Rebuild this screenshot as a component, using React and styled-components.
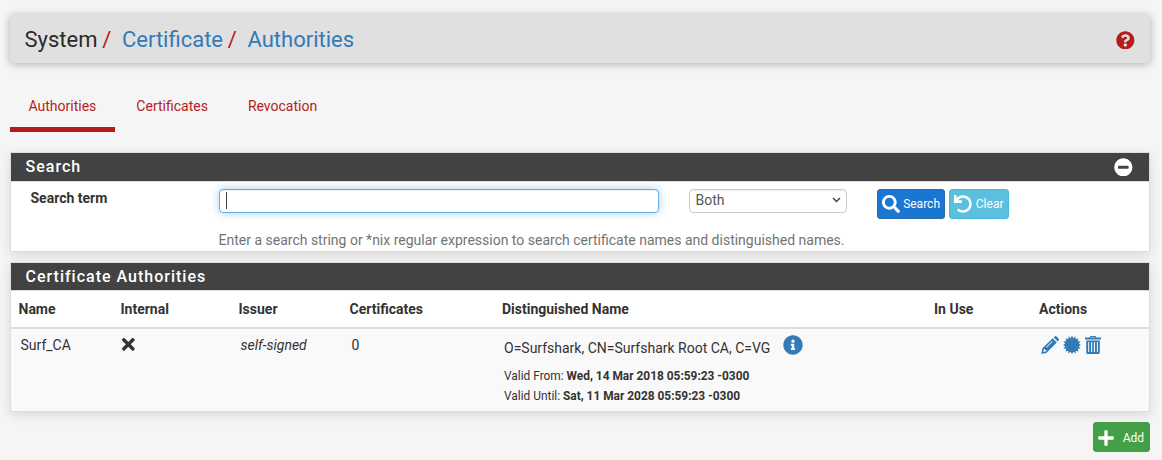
import React from "react";
import styled, { createGlobalStyle, css } from "styled-components";
import {
  FaQuestionCircle,
  FaMinusCircle,
  FaSearch,
  FaUndo,
  FaTimes,
  FaInfoCircle,
  FaPlus,
} from "react-icons/fa";

const Global = createGlobalStyle`
  * { box-sizing: border-box; }
  body {
    margin: 0;
    background: #f5f5f5;
    color: #333;
    font-family: Roboto, "Liberation Sans", sans-serif;
    font-size: 14px;
    line-height: 20px;
    overflow: hidden;
  }
  svg { display: block; flex: none; }
`;

const Page = styled.div`
  padding: 15px 12px 0 10px;
`;

const Header = styled.header`
  display: flex;
  align-items: center;
  justify-content: space-between;
  height: 48px;
  padding: 2px 15px 0 14.5px;
  background: #e0e0e0;
  border-radius: 3px;
  box-shadow: 0 1px 9px rgba(0, 0, 0, 0.3);
  color: #b71c1c;
`;

const Crumbs = styled.nav`
  display: flex;
  font-size: 22px;
  line-height: 46px;
  color: #2b2b2b;
`;

const Crumb = styled.a`
  color: #337ab7;
`;

const Slash = styled.span`
  color: #b71c1c;
  padding: 0 10.7px 0 4.7px;
`;

const Tabs = styled.ul`
  display: flex;
  list-style: none;
  margin: 20px 0 20px;
  padding: 0;
`;

const Tab = styled.li`
  height: 49px;
  padding: 13px 18.5px 0;
  margin-right: 3px;
  color: #b71c1c;
  border-bottom: 5px solid ${(p) => (p.$active ? "#b71c1c" : "transparent")};
`;

const Panel = styled.section`
  margin-bottom: 10px;
  background: #fff;
  border: 1px solid #ddd;
  box-shadow: 0 3px 10px rgba(0, 0, 0, 0.12);
`;

const PanelTitle = styled.h2`
  display: flex;
  align-items: center;
  justify-content: space-between;
  height: ${(p) => p.$height}px;
  margin: 0;
  padding: 0 16px 0 14.5px;
  background: #424242;
  border-bottom: 1px solid #ddd;
  color: #fff;
  font-size: 16px;
  font-weight: 500;
  letter-spacing: 1px;
`;

const SearchForm = styled.div`
  display: grid;
  grid-template-columns: 188.5px 440px 188px auto;
  height: 69px;
  padding: 7px 0 0 19.5px;
`;

const Label = styled.label`
  font-weight: 700;
  line-height: 19px;
`;

const fieldBox = css`
  display: flex;
  align-items: center;
  height: 24px;
  background: #fff;
  border-radius: 4px;
  color: #555;
`;

const TextField = styled.div`
  ${fieldBox}
  padding: 0 6px 2px;
  border: 1px solid #66afe9;
  box-shadow: inset 0 1px 1px rgba(0, 0, 0, 0.075), 0 0 8px rgba(102, 175, 233, 0.6);
`;

const Caret = styled.span`
  width: 1px;
  height: 17px;
  background: #444;
`;

const Select = styled.div`
  ${fieldBox}
  justify-content: space-between;
  padding: 0 5px 2px 5.5px;
  margin-left: 30px;
  border: 1px solid #ccc;
  box-shadow: inset 0 1px 1px rgba(0, 0, 0, 0.075);
`;

const Buttons = styled.div`
  display: flex;
  gap: 4px;
  margin-left: 30px;
`;

const tones = {
  blue: ["#1976d2", "#2e6da4"],
  cyan: ["#5bc0de", "#46b8da"],
  green: ["#43a047", "#43a047"],
};

const Button = styled.button`
  display: flex;
  align-items: center;
  justify-content: space-between;
  width: ${(p) => p.$width}px;
  height: 30px;
  padding: ${(p) => p.$pad || "0 4px 0 3.5px"};
  border: 1px solid ${(p) => tones[p.$tone][1]};
  border-radius: 3px;
  background: ${(p) => tones[p.$tone][0]};
  color: #fff;
  font: 12px/18px Roboto, "Liberation Sans", sans-serif;
`;

const Help = styled.p`
  grid-column: 2 / -1;
  margin: 10px 0 0 -0.5px;
  color: #737373;
`;

const columns = css`
  display: grid;
  grid-template-columns: 102px 118px 111px 152.5px 432px 105px 1fr;
`;

const HeadRow = styled.div`
  ${columns}
  height: 38px;
  padding: 8px 0 0 7.5px;
  border-bottom: 2px solid #ddd;
  font-weight: 700;
`;

const BodyRow = styled.div`
  ${columns}
  height: 82px;
  padding: 6px 0 0 9.5px;
  background: #f9f9f9;
`;

const Mark = styled.span`
  margin-left: -3.5px;
`;

const Line = styled.div`
  display: flex;
  align-items: center;
  gap: 13px;
  color: #337ab7;
`;

const Subject = styled.span`
  color: #333;
  padding-top: 3px;
  margin-bottom: -3px;
`;

const Validity = styled.div`
  margin-top: 11px;
  font-size: 11.9px;
`;

const Actions = styled.div`
  display: flex;
  gap: 4px;
  height: 20px;
  align-items: center;
  color: #337ab7;
`;

const Footer = styled.footer`
  display: flex;
  justify-content: flex-end;
`;

const spikes = Array.from({ length: 32 }, (_, i) => {
  const a = (i * Math.PI) / 16;
  const r = i % 2 ? 6.9 : 9.2;
  return `${(9 + r * Math.sin(a)).toFixed(2)},${(9 - r * Math.cos(a)).toFixed(2)}`;
}).join(" ");

const Seal = () => (
  <svg width="18" height="18" viewBox="0 0 18 18">
    <polygon points={spikes} fill="currentColor" />
  </svg>
);

const Pencil = () => (
  <svg width="18" height="18" viewBox="0 0 18 18" fill="currentColor">
    <path d="M12.6 1.2l1-.8a1.6 1.6 0 0 1 2 .1l1.9 1.9a1.6 1.6 0 0 1 .1 2l-.9 1.1z" />
    <path
      fillRule="evenodd"
      d="M11.6 2.2l4.2 4.2L5.3 16.9.3 18l1-5.4zM3 12.9l-.8 3 3-.7V14H3.900V12.900zM10.900 5.200L5.200 10.900l.6.6 5.700-5.700z"
    />
  </svg>
);

const Trash = () => (
  <svg width="16" height="18" viewBox="0 0 16 18" fill="currentColor">
    <path fillRule="evenodd" d="M0 1.600h4.500L5.600 0h4.800l1.100 1.600H16v2H0zM6 1.600h4l-.4-.6H6.400z" />
    <path
      fillRule="evenodd"
      d="M1.200 4.500h13.600v11.900a1.500 1.500 0 0 1-1.500 1.500H2.700a1.500 1.500 0 0 1-1.500-1.500zM3.200 6v10h1V6zM6.100 6v10h1.100V6zM8.900 6v10H10V6zM11.900 6v10h1V6z"
    />
  </svg>
);

const Chevron = () => (
  <svg width="9" height="6" viewBox="0 0 9 6" fill="none" stroke="#444" strokeWidth="1.5">
    <path d="M1 1l3.5 3.5L8 1" />
  </svg>
);

export default function App() {
  return (
    <Page>
      <Global />
      <Header>
        <Crumbs>
          <span>System</span>
          <Slash>/</Slash>
          <Crumb>Certificate</Crumb>
          <Slash>/</Slash>
          <Crumb>Authorities</Crumb>
        </Crumbs>
        <FaQuestionCircle size={18.67} />
      </Header>

      <Tabs>
        <Tab $active>Authorities</Tab>
        <Tab>Certificates</Tab>
        <Tab>Revocation</Tab>
      </Tabs>

      <Panel>
        <PanelTitle $height={29}>
          Search
          <FaMinusCircle size={18.67} />
        </PanelTitle>
        <SearchForm>
          <Label>Search term</Label>
          <TextField>
            <Caret />
          </TextField>
          <Select>
            Both
            <Chevron />
          </Select>
          <Buttons>
            <Button $tone="blue" $width={68}>
              <FaSearch size={18} />
              Search
            </Button>
            <Button $tone="cyan" $width={60} $pad="0 4.5px 0 3.5px">
              <FaUndo size={18} />
              Clear
            </Button>
          </Buttons>
          <Help>
            Enter a search string or *nix regular expression to search certificate names and
            distinguished names.
          </Help>
        </SearchForm>
      </Panel>

      <Panel>
        <PanelTitle $height={28}>Certificate Authorities</PanelTitle>
        <HeadRow>
          <span>Name</span>
          <span>Internal</span>
          <span>Issuer</span>
          <span>Certificates</span>
          <span>Distinguished Name</span>
          <span>In Use</span>
          <span>Actions</span>
        </HeadRow>
        <BodyRow>
          <span>Surf_CA</span>
          <Mark>
            <FaTimes size={18.67} />
          </Mark>
          <i>self-signed</i>
          <span>0</span>
          <div>
            <Line>
              <Subject>O=Surfshark, CN=Surfshark Root CA, C=VG</Subject>
              <FaInfoCircle size={20} />
            </Line>
            <Validity>
              Valid From: <b>Wed, 14 Mar 2018 05:59:23 -0300</b>
              <br />
              Valid Until: <b>Sat, 11 Mar 2028 05:59:23 -0300</b>
            </Validity>
          </div>
          <span />
          <Actions>
            <Pencil />
            <Seal />
            <Trash />
          </Actions>
        </BodyRow>
      </Panel>

      <Footer>
        <Button $tone="green" $width={57} $pad="2px 5px 0 3px">
          <FaPlus size={18} />
          Add
        </Button>
      </Footer>
    </Page>
  );
}
